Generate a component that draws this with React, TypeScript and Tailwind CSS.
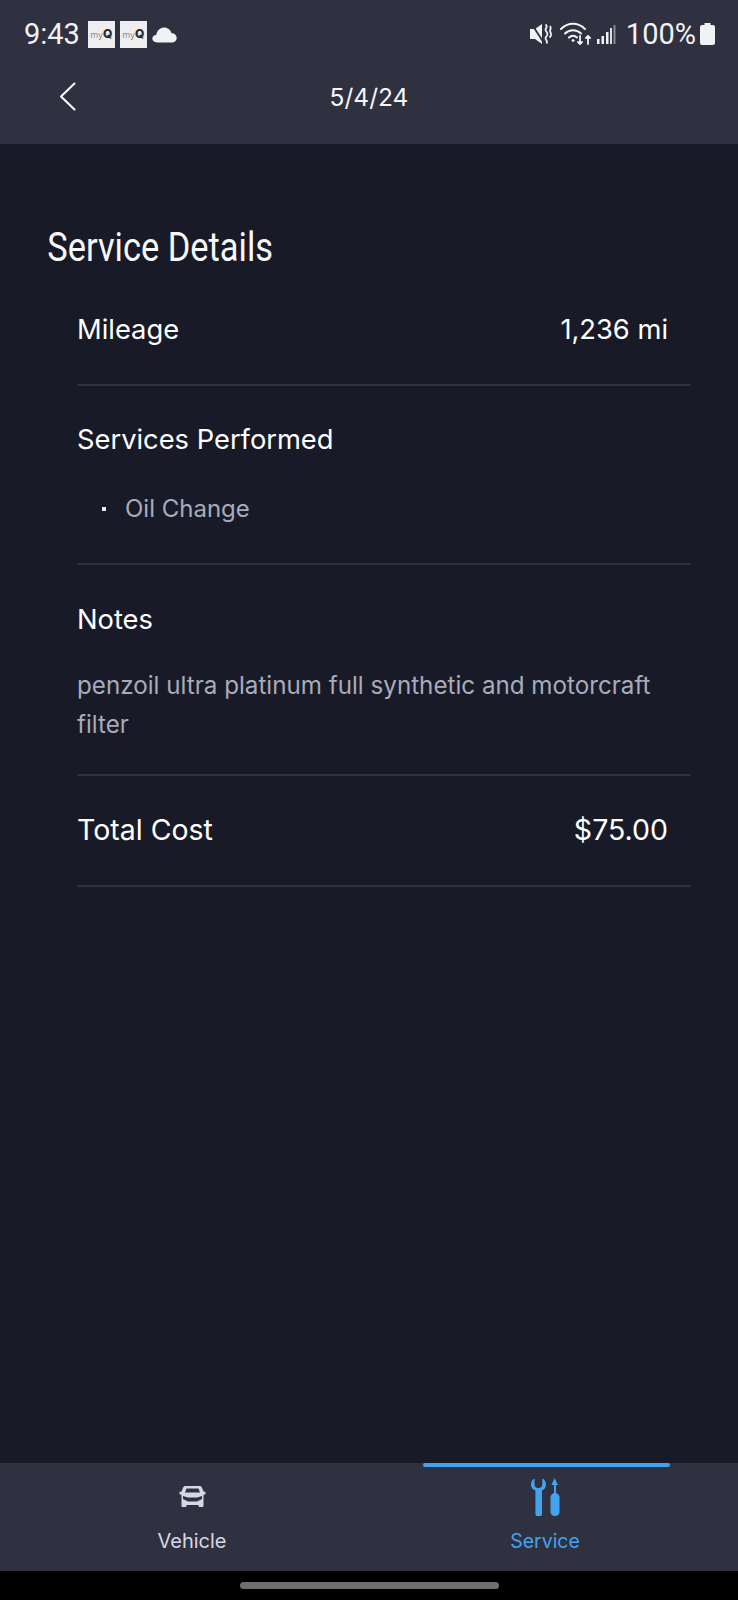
const sans = "font-['Inter','Noto_Sans',sans-serif]"

function MyQ() {
  return (
    <div className="flex h-[27px] w-[27px] items-center justify-center bg-[#eeeef0] font-['Inter',sans-serif] text-[#6a6b72]">
      <span className="text-[9px] font-light leading-none">my</span>
      <span className="text-[12px] font-extrabold leading-none text-[#25262c]">Q</span>
    </div>
  )
}

function StatusBar() {
  return (
    <div className="flex h-[68px] items-center justify-between pl-6 pr-[23px] text-[#f1f2f4]">
      <div className="flex items-center">
        <span className="mr-[8px] font-['Roboto',sans-serif] text-[29px] leading-none">9:43</span>
        <div className="flex gap-[5px]">
          <MyQ />
          <MyQ />
        </div>
        <svg className="ml-[5px]" width="25" height="17" viewBox="0 0 25 17" fill="#f1f2f4">
          <path d="M5 16.500C2.200 16.500 .3 14.800 .3 12.600 .3 10.500 2 9 4.200 8.900 5 4.500 8.300 1.500 12.200 1.500c3.400 0 6.200 2.300 7.200 5.500 3 .2 5.300 2.400 5.300 5 0 2.600-2.200 4.500-5 4.500z" />
        </svg>
      </div>
      <div className="flex items-center">
        <svg width="22" height="22" viewBox="0 0 22 22" fill="#f1f2f4">
          <path d="M0 6h5l7-5v20l-7-5H0z" />
          <path d="M1 0l13 20" stroke="#2f3140" strokeWidth="1.800" />
          <path d="M15.500 1.500c3.500 3-1.500 4 .5 6.500s2 3.500 0 6 2.500 3.500 .5 6.500M20 3c2 3-1 4 .5 6.500s.5 3.500-1 5" fill="none" stroke="#f1f2f4" strokeWidth="1.800" />
        </svg>
        <svg className="ml-[8px]" width="33" height="24" viewBox="0 0 33 24" fill="none" stroke="#f1f2f4" strokeWidth="2" strokeLinecap="round">
          <path d="M1 7c7-7 17-7 24 0" />
          <path d="M5 11.500c4.500-4.500 11.500-4.500 16 0" />
          <path d="M9 15.500c2.500-2.500 5.500-2.500 8 0" />
          <circle cx="13" cy="18.500" r="1" fill="#f1f2f4" strokeWidth="1" />
          <path d="M20 14v8M18 20l2 2 2-2M28 22v-8M26 16l2-2 2 2" strokeWidth="1.800" />
        </svg>
        <svg className="ml-[3px]" width="20" height="22" viewBox="0 0 20 22" fill="#f1f2f4">
          <rect x="1" y="16" width="2.500" height="5" />
          <rect x="5.500" y="13" width="2.500" height="8" />
          <rect x="10" y="9" width="2.500" height="12" />
          <rect x="14" y="5" width="2" height="16" opacity="0.900" />
          <rect x="17.500" y="2" width="2" height="19" opacity="0.450" />
        </svg>
        <span className="ml-[10px] font-['Roboto',sans-serif] text-[29px] leading-none">100%</span>
        <svg className="ml-[4px]" width="15" height="22" viewBox="0 0 15 22" fill="#f1f2f4">
          <path d="M4.500 0h6v2h2.500a2 2 0 0 1 2 2v16a2 2 0 0 1-2 2H2a2 2 0 0 1-2-2V4a2 2 0 0 1 2-2h2.500z" />
        </svg>
      </div>
    </div>
  )
}

function Divider() {
  return <div className="h-[2px] bg-[#2e3140]" />
}

export default function App() {
  return (
    <div className={`flex h-[1600px] w-[738px] flex-col overflow-hidden bg-[#181b27] ${sans}`}>
      <div className="h-[144px] bg-[#2f3140]">
        <StatusBar />
        <div className="relative flex h-[58px] items-center justify-center">
          <svg className="absolute left-[59px] top-[14px]" width="17" height="29" viewBox="0 0 17 29" fill="none" stroke="#ffffff" strokeWidth="2" strokeLinecap="round" strokeLinejoin="round">
            <path d="M15.500 1.500 2 14.500l13.500 13" />
          </svg>
          <span className="text-[24.500px] leading-none text-[#f5f6f8]">5/4/24</span>
        </div>
      </div>

      <main className="flex-1 pt-[81px]">
        <h1 className="origin-left scale-x-[0.86] pl-[55px] font-['Roboto',sans-serif] text-[40px] leading-[46px] text-[#f7f8fa]">Service Details</h1>
        <div className="pl-[77px] pr-[47px] text-white">
          <div className="flex h-[113px] items-center justify-between pr-[23px] pt-[6px] text-[27.300px]">
            <span>Mileage</span>
            <span>1,236 mi</span>
          </div>
          <Divider />
          <div className="h-[177px]">
            <div className="pt-[38px] text-[27.300px] leading-8">Services Performed</div>
            <ul className="mt-[39px] pl-[25px] text-[24px] leading-7 text-[#a8abba]">
              <li className="flex items-center">
                <span className="mr-[19px] h-1 w-1 bg-[#e8e9ee]" />
                Oil Change
              </li>
            </ul>
          </div>
          <Divider />
          <div className="h-[209px]">
            <div className="pt-[39px] text-[27.300px] leading-8">Notes</div>
            <p className="mt-[30px] pr-[20px] text-[24.200px] leading-[39px] text-[#a8abba]">penzoil ultra platinum full synthetic and motorcraft filter</p>
          </div>
          <Divider />
          <div className="flex h-[109px] items-center justify-between pr-[23px] text-[28.500px]">
            <span>Total Cost</span>
            <span>$75.00</span>
          </div>
          <Divider />
        </div>
      </main>

      <nav className="flex h-[108px] bg-[#2f3140]">
        <div className="flex w-[384px] flex-col items-center">
          <div className="flex h-[45px] items-end">
            <svg width="27" height="22" viewBox="0 0 26 22" fill="#d5d8e4">
              <path fillRule="evenodd" d="M6 0h14c1.200 0 2 .6 2.500 1.700L24 5.500l2 .5v2l-2 1v11a1 1 0 0 1-1 1h-3a1 1 0 0 1-1-1v-1H7v1a1 1 0 0 1-1 1H3a1 1 0 0 1-1-1V9L0 8V6l2-.5 1.500-3.800C4 .6 4.800 0 6 0zM7 2.500 5.500 6.500h15L19 2.500zM3.500 10v3l5 2.500h9l5-2.500v-3l-5 1.500h-9z" />
            </svg>
          </div>
          <span className="mt-[21px] text-[20px] leading-6 text-[#d5d8e4]">Vehicle</span>
        </div>
        <div className="relative flex w-[322px] flex-col items-center">
          <div className="absolute left-[39px] top-0 h-1 w-[247px] rounded-full bg-[#42a3ee]" />
          <div className="flex h-[53px] items-end">
            <svg width="29" height="38" viewBox="0 0 29 38" fill="#42a3ee">
              <path d="M3.500 .5v5.500a3.900 3.900 0 0 0 7.800 0V.5c2.500 1.200 3.700 3.500 3.700 6 0 2.800-1.500 5-4 6V35.500a3.300 3.300 0 0 1-6.600 0V12.500C1.500 11.500 0 9.300 0 6.500 0 4 1.200 1.700 3.500 .5z" />
              <path d="M23.500 0l3.500 7H25V15c2.200 1 3.500 2 3.500 4v15c0 2-1.500 4-4.500 4S19.500 36 19.500 34V19c0-2 1.300-3 3.500-4V7h-2.500z" />
            </svg>
          </div>
          <span className="mt-[13px] text-[19.500px] leading-6 text-[#42a3ee]">Service</span>
        </div>
      </nav>

      <div className="flex h-[29px] items-start justify-center bg-black pt-[11px]">
        <div className="h-[7px] w-[259px] rounded-full bg-[#6f6f6f]" />
      </div>
    </div>
  )
}
